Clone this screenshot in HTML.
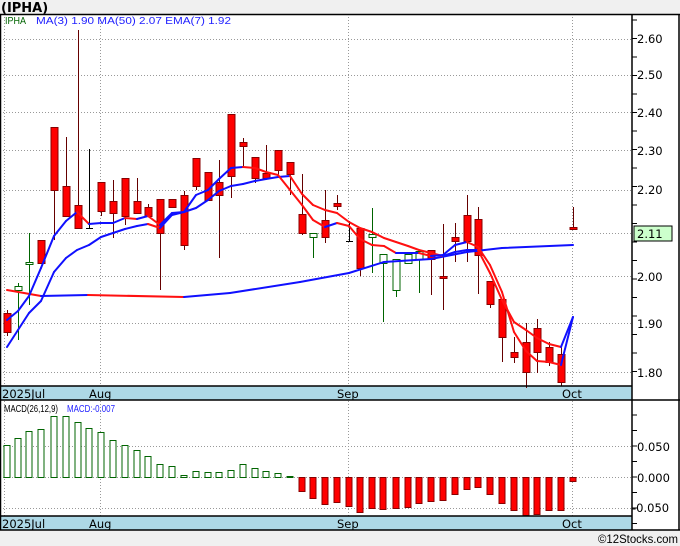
<!DOCTYPE html>
<html><head><meta charset="utf-8"><style>
html,body{margin:0;padding:0;background:#f0f0f0;}
svg{display:block;font-family:"DejaVu Sans","Liberation Sans",sans-serif;}
.l{font-family:"Liberation Sans",sans-serif;}
</style></head><body>
<svg id="s" width="680" height="546" viewBox="0 0 680 546" xmlns="http://www.w3.org/2000/svg">
<rect x="0" y="0" width="680" height="546" fill="#f0f0f0"/>
<rect x="0" y="14" width="680" height="516" fill="#fff"/>
<text x="1" y="12" font-size="13" font-weight="bold" fill="#000">(IPHA)</text>
<g id="grid" stroke="#999" stroke-dasharray="1,2" stroke-width="1"></g>
<rect x="0" y="386" width="632" height="14" fill="#add8e6"/>
<rect x="0" y="516" width="632" height="14" fill="#add8e6"/>
<g id="plot"></g>
<g stroke="#000" stroke-width="1.5" fill="none">
<line x1="0" y1="14.5" x2="680" y2="14.5"/>
<line x1="679" y1="14" x2="679" y2="530"/>
<line x1="0.5" y1="14" x2="0.5" y2="530"/>
<line x1="632" y1="14" x2="632" y2="530"/>
<line x1="0" y1="386" x2="632" y2="386"/>
<line x1="0" y1="400" x2="680" y2="400"/>
<line x1="0" y1="516" x2="632" y2="516"/>
<line x1="0" y1="530" x2="680" y2="530"/>
</g>
<g id="ticks" stroke="#000" stroke-width="1"></g>
<g font-size="11.5" fill="#000">
<text x="637" y="43">2.60</text><text x="637" y="79">2.50</text><text x="637" y="117">2.40</text>
<text x="637" y="155">2.30</text><text x="637" y="194">2.20</text><text x="637" y="281">2.00</text>
<text x="637" y="328">1.90</text><text x="637" y="377">1.80</text>
<text x="637" y="451">0.050</text><text x="637" y="482">0.000</text><text x="632" y="512">-0.050</text>
<text x="2" y="398">2025Jul</text><text x="89" y="398">Aug</text><text x="337" y="398">Sep</text><text x="562" y="398">Oct</text>
<text x="2" y="528">2025Jul</text><text x="89" y="528">Aug</text><text x="337" y="528">Sep</text><text x="562" y="528">Oct</text>
</g>
<rect x="634" y="226" width="38" height="15" fill="#ccffcc" stroke="#000"/>
<text x="637" y="238" font-size="11.5" fill="#000">2.11</text>
<text class="l" x="5" y="24" font-size="10.5" fill="#006400" textLength="21" lengthAdjust="spacingAndGlyphs">IPHA</text>
<text class="l" x="36" y="24" font-size="10.5" fill="#2222ff" textLength="195" lengthAdjust="spacingAndGlyphs">MA(3)  1.90  MA(50)  2.07  EMA(7)  1.92</text>
<text class="l" x="4" y="412" font-size="10.5" fill="#000" textLength="54" lengthAdjust="spacingAndGlyphs">MACD(26,12,9)</text>
<text class="l" x="67" y="412" font-size="10.5" fill="#2222ff" textLength="48" lengthAdjust="spacingAndGlyphs">MACD:-0.007</text>
<text class="l" x="598" y="543" font-size="12" fill="#000" textLength="80" lengthAdjust="spacingAndGlyphs">©12Stocks.com</text>
</svg>
<script>
var NS="http://www.w3.org/2000/svg";
function el(p,t,a){var e=document.createElementNS(NS,t);for(var k in a)e.setAttribute(k,a[k]);p.appendChild(e);return e;}
var g=document.getElementById('grid'),p=document.getElementById('plot'),tk=document.getElementById('ticks');
[39,75,112,150,190,233,276,323,372,446,477,508].forEach(function(y){el(g,'line',{x1:0,y1:y+.5,x2:632,y2:y+.5});});
[4,100,348,572].forEach(function(x){el(g,'line',{x1:x+.5,y1:14,x2:x+.5,y2:530});});
for(var y=20;y<386;y+=18.5)el(tk,'line',{x1:632,y1:y,x2:637,y2:y});
for(var y=415;y<530;y+=15.5)el(tk,'line',{x1:632,y1:y,x2:637,y2:y});
var xs=[7,18,29,41,54,66,78,89,101,113,125,137,148,160,172,184,196,208,219,231,243,255,266,278,290,302,313,325,337,349,360,372,383,396,408,419,431,443,455,467,478,490,502,514,526,537,549,561,573];
var c=[[313,332,310,336,'r'],[286,290,283,340,'g'],[262,264,233,305,'g'],[240,263,240,263,'r'],[127,190,127,240,'r'],[186,216,137,216,'r'],[205,228,30,228,'r'],[228,228,149,228,'k'],[182,211,182,216,'r'],[201,213,180,238,'r'],[178,216,178,225,'r'],[201,213,178,213,'r'],[207,216,204,216,'r'],[199,233,199,290,'r'],[199,207,199,207,'r'],[195,245,191,250,'r'],[158,186,158,190,'r'],[172,200,172,200,'r'],[182,195,160,258,'r'],[114,176,114,198,'r'],[142,146,138,167,'r'],[157,178,157,183,'r'],[173,178,145,178,'r'],[150,170,150,175,'r'],[162,174,162,195,'r'],[214,233,174,235,'r'],[233,237,233,258,'g'],[220,237,190,243,'r'],[203,206,195,210,'r'],[241,241,221,241,'k'],[228,268,228,276,'r'],[234,237,208,273,'g'],[254,263,254,322,'g'],[259,290,259,297,'g'],[254,263,254,263,'g'],[251,259,251,293,'g'],[250,259,250,295,'r'],[276,277,224,310,'r'],[237,241,223,262,'r'],[215,241,195,262,'r'],[219,255,207,294,'r'],[281,304,281,308,'r'],[299,337,299,362,'r'],[352,357,337,363,'r'],[342,372,323,388,'r'],[328,352,319,373,'r'],[347,362,342,366,'r'],[354,382,347,386,'r'],[227,229,207,229,'r']];
c.forEach(function(d,i){var x=xs[i];var wc=d[4]=='g'?'#006400':(d[4]=='k'?'#000':'#600');
el(p,'line',{x1:x+.5,y1:d[2],x2:x+.5,y2:d[3],stroke:wc,'stroke-width':1});
if(d[4]=='k'){el(p,'line',{x1:x-3,y1:d[0]+.5,x2:x+4,y2:d[0]+.5,stroke:'#000'});return;}
var h=Math.max(d[1]-d[0],2);
el(p,'rect',{x:x-3,y:d[0]+.5,width:7,height:h,fill:d[4]=='g'?'#fff':'#f00',stroke:d[4]=='g'?'#006400':'#800','stroke-width':1});});
function line(pts){for(var i=1;i<pts.length;i++){var a=pts[i-1],b=pts[i];el(p,'line',{x1:a[0],y1:a[1],x2:b[0],y2:b[1],stroke:b[1]<=a[1]?'#1010ff':'#ff1010','stroke-width':2,'stroke-linecap':'round'});}}
line([[7,290],[41,296],[88,295],[184,297],[230,293],[300,282],[349,273],[384,262],[431,259],[467,252],[502,248],[573,245]]);
line([[7,347],[18,330],[29,313],[41,301],[54,272],[66,258],[77,250],[89,245],[101,237],[113,233],[125,229],[137,226],[148,224],[160,228],[172,215],[184,212],[196,208],[208,200],[219,191],[231,186],[243,184],[255,181],[266,179],[278,177],[290,176],[302,194],[313,205],[325,210],[337,213],[349,222],[360,228],[372,232],[384,238],[396,242],[408,246],[419,250],[431,253],[443,256],[455,252],[467,250],[478,250],[490,273],[502,300],[514,322],[526,330],[537,338],[549,344],[561,347],[573,317]]);
line([[7,320],[18,311],[29,296],[41,268],[54,236],[66,221],[77,212],[89,224],[101,223],[113,223],[125,218],[137,219],[148,216],[160,225],[172,213],[184,212],[196,195],[208,190],[219,179],[231,168],[243,167],[255,168],[266,172],[278,175],[290,190],[302,205],[313,220],[325,227],[337,223],[349,226],[360,239],[372,245],[384,246],[396,253],[408,253],[419,253],[431,256],[443,255],[455,245],[467,242],[478,247],[490,265],[502,292],[514,332],[526,351],[537,361],[549,362],[561,365],[573,317]]);
var m=[445,438,431,429,416,416,422,428,432,440,445,450,456,464,466,475,471,472,472,470,464,468,471,473,476,491,498,504,502,506,512,508,509,508,507,503,501,500,494,489,487,494,503,510,515,514,510,510,481];
m.forEach(function(v,i){var x=xs[i];if(v<477)el(p,'rect',{x:x-3,y:v+.5,width:6,height:477-v,fill:'#fff',stroke:'#006400','stroke-width':1});
else el(p,'rect',{x:x-3,y:477.5,width:6,height:v-477,fill:'#f00',stroke:'#800','stroke-width':1});});
</script>
</body></html>
